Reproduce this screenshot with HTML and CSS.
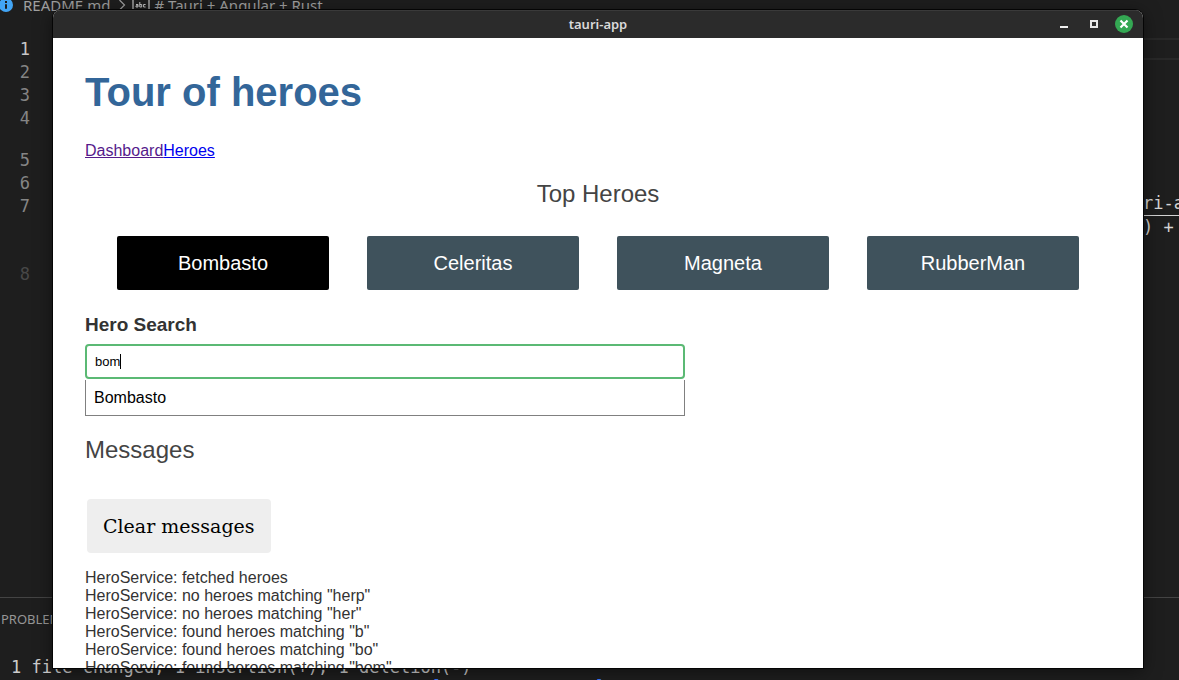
FILE: index.html
```html
<!DOCTYPE html>
<html lang="en">
<head>
<meta charset="utf-8">
<meta name="viewport" content="width=device-width, initial-scale=1">
<title>tauri-app</title>
<link rel="stylesheet" href="styles.css">
</head>
<body>
<div class="desktop">
  <section class="ide" aria-label="Editor">
    <div class="breadcrumb">
      <svg class="info" viewBox="0 0 14 14" aria-hidden="true"><circle cx="7" cy="7" r="7" fill="#42a5f5"/><path d="M6 6.2h2v4.6H6zM6 3h2v2H6z" fill="#1e1e1e"/></svg>
      <span class="crumb-file">README.md</span>
      <svg class="chevron" viewBox="0 0 8 12" aria-hidden="true"><path d="M1.5 1 6.5 6l-5 5" fill="none" stroke="#a0a0a0" stroke-width="1.2"/></svg>
      <svg class="symbol" viewBox="0 0 18 14" aria-hidden="true"><path d="M4 1H1v12h3M14 1h3v12h-3" fill="none" stroke="#b8b8b8" stroke-width="1.3"/><g fill="none" stroke="#c5c5c5"><path d="M4 6.5h2V9H4V7.8h2M7.8 4v5h1.9V6.5H7.8M13.6 6.5h-2V9h2"/></g></svg>
      <span># Tauri + Angular + Rust</span>
    </div>
    <div class="editor">
      <ol class="gutter">
        <li class="current">1</li><li>2</li><li>3</li><li class="wrap-two">4</li>
        <li>5</li><li>6</li><li class="wrap-three">7</li><li class="dim">8</li>
      </ol>
      <div class="code">
        <div class="active-line"></div>
        <div class="code-end"><a href="#tauri">ri-apps</a><span>) + [r</span></div>
      </div>
    </div>
    <div class="panel">
      <div class="panel-title">PROBLEMS</div>
      <pre class="terminal">1 file changed, 1 insertion(+), 1 deletion(-)
<span class="path">                                         [               ]</span></pre>
    </div>
  </section>

  <main class="window">
    <header class="titlebar">
      <span class="title">tauri-app</span>
      <div class="controls">
        <button class="control" type="button" aria-label="Minimize"><svg viewBox="0 0 18 18"><path d="M5 12h8" stroke="#eee" stroke-width="2"/></svg></button>
        <button class="control" type="button" aria-label="Maximize"><svg viewBox="0 0 18 18"><path d="M6 6h6v6H6z" fill="none" stroke="#e6e6e6" stroke-width="2"/></svg></button>
        <button class="control close" type="button" aria-label="Close"><svg viewBox="0 0 18 18"><path d="m5.5 5.5 7 7m0-7-7 7" stroke="#fff" stroke-width="2.2"/></svg></button>
      </div>
    </header>
    <div class="app">
      <h1>Tour of heroes</h1>
      <nav><a class="visited" href="#dashboard">Dashboard</a><a href="#heroes">Heroes</a></nav>
      <h2 class="top-title">Top Heroes</h2>
      <div class="heroes">
        <a class="hero hovered" href="#bombasto">Bombasto</a>
        <a class="hero" href="#celeritas">Celeritas</a>
        <a class="hero" href="#magneta">Magneta</a>
        <a class="hero" href="#rubberman">RubberMan</a>
      </div>
      <div class="search">
        <label for="search-box">Hero Search</label>
        <div class="field">
          <input id="search-box" type="text" value="bom" autocomplete="off">
          <span class="caret" aria-hidden="true"></span>
        </div>
        <ul class="results"><li><a href="#bombasto">Bombasto</a></li></ul>
      </div>
      <h2 class="messages-title">Messages</h2>
      <button class="clear" type="button">Clear messages</button>
      <div class="messages">
        <div>HeroService: fetched heroes</div>
        <div>HeroService: no heroes matching "herp"</div>
        <div>HeroService: no heroes matching "her"</div>
        <div>HeroService: found heroes matching "b"</div>
        <div>HeroService: found heroes matching "bo"</div>
        <div>HeroService: found heroes matching "bom"</div>
      </div>
    </div>
  </main>
</div>
</body>
</html>
```
FILE: styles.css
```css
* { box-sizing: border-box; }

body {
  margin: 0;
  background: #1e1e1e;
  font-family: "Liberation Sans", Arial, sans-serif;
}

.desktop {
  position: relative;
  height: 100vh;
  overflow: hidden;
}

/* Editor behind the window */
.ide {
  display: flex;
  flex-direction: column;
  height: 100%;
  color: #d4d4d4;
}

.breadcrumb {
  display: flex;
  align-items: center;
  height: 10px;
  font: 15px/20px "Noto Sans", sans-serif;
  color: #a0a0a0;
  white-space: nowrap;
}

.info { width: 14px; height: 14px; margin: 0 10px 0 -1px; }
.crumb-file { margin-right: 8px; }
.chevron { width: 8px; height: 12px; margin-right: 6px; }
.symbol { width: 18px; height: 14px; margin-right: 4px; }

.editor {
  display: flex;
  flex: 1;
  padding-top: 28px;
  font: 17px/23px "DejaVu Sans Mono", monospace;
}

.gutter {
  width: 30px;
  margin: 0;
  padding: 0;
  list-style: none;
  text-align: right;
  color: #858585;
}

.gutter .current { color: #c6c6c6; }
.gutter .wrap-two { padding-bottom: 19px; }
.gutter .wrap-three { padding-bottom: 45px; }
.gutter .dim { color: #484848; }

.code {
  flex: 1;
  margin-left: 24px;
}

.active-line {
  height: 22px;
  border: solid #282828;
  border-width: 2px 0;
}

.code-end {
  display: flex;
  flex-direction: column;
  width: 36px;
  margin: 132px 0 0 auto;
  overflow: hidden;
  white-space: nowrap;
}

.code-end a {
  border-bottom: 1px solid #d4d4d4;
  color: inherit;
  text-decoration: none;
}

.panel {
  height: 83px;
  padding: 10px 0 0 1px;
  border-top: 1px solid #444;
  overflow: hidden;
}

.panel-title {
  font: 13px/22px "Noto Sans", sans-serif;
  color: #969696;
}

.terminal {
  margin: 0;
  padding: 27px 0 0 10px;
  font: 17px/20px "DejaVu Sans Mono", monospace;
  color: #ccc;
}

.path { color: #3b78ff; }

/* Floating application window */
.window {
  position: absolute;
  inset: 10px 36px 12px 53px;
  display: flex;
  flex-direction: column;
  overflow: hidden;
  border-radius: 8px 8px 0 0;
  background: #fff;
  box-shadow: 0 0 0 1px #050505, 0 3px 18px rgba(0, 0, 0, 0.5);
}

.titlebar {
  display: grid;
  grid-template-columns: 1fr auto 1fr;
  align-items: center;
  flex: none;
  height: 28px;
  padding: 0 10px;
  background: #2b2b2b;
  box-shadow: inset 0 1px #3a3a3a;
}

.title {
  grid-column: 2;
  font: 600 13px/18px "Noto Sans", sans-serif;
  color: #dadada;
}

.controls {
  display: flex;
  justify-content: flex-end;
  gap: 12px;
}

.control {
  width: 18px;
  height: 18px;
  padding: 0;
  border: 0;
  border-radius: 50%;
  background: none;
}

.control svg { display: block; }
.close { background: #34a853; }

.app {
  flex: 1;
  min-height: 0;
  overflow: hidden;
  padding: 31px 32px 0;
  font-size: 16px;
  line-height: 18px;
}

h1 {
  margin: 0 0 27px;
  font-size: 40px;
  line-height: 46px;
  color: #336699;
}

nav a { color: #0000ee; }
nav .visited { color: #551a8b; }

h2 {
  margin: 0;
  font-size: 24px;
  font-weight: 400;
  line-height: 28px;
  color: #444;
}

.top-title {
  margin: 20px 0 28px;
  text-align: center;
}

.heroes {
  display: grid;
  grid-template-columns: repeat(4, 1fr);
  gap: 38px;
  padding: 0 32px;
}

.hero {
  padding: 16px;
  border-radius: 2px;
  background: #3f525c;
  color: #fff;
  font-size: 20px;
  line-height: 22px;
  text-align: center;
  text-decoration: none;
}

.hovered { background: #000; }

.search {
  max-width: 600px;
  margin-top: 24px;
}

.search label {
  display: block;
  margin-bottom: 8px;
  font-size: 19px;
  font-weight: 700;
  line-height: 22px;
  color: #333;
}

.field { position: relative; }

.field input {
  display: block;
  width: 100%;
  height: 35px;
  padding: 0 8px;
  border: 2px solid #5bb974;
  border-radius: 4px;
  outline: 0;
  background: #fff;
  font: 13px/16px "Liberation Sans", Arial, sans-serif;
  color: #000;
}

.caret {
  position: absolute;
  top: 10px;
  left: 35px;
  width: 1px;
  height: 15px;
  background: #000;
}

.results {
  margin: 1px 0 0;
  padding: 0;
  border: solid #808080;
  border-width: 0 1px 1px;
  list-style: none;
}

.results a {
  display: block;
  padding: 9px 8px 8px;
  color: #000;
  text-decoration: none;
}

.messages-title { margin: 20px 0 35px; }

.clear {
  display: block;
  margin: 0 2px 16px;
  padding: 16px;
  border: 0;
  border-radius: 4px;
  background: #eee;
  font: 19px/22px "DejaVu Serif", serif;
  color: #000;
}

.messages { color: #333; }
```
